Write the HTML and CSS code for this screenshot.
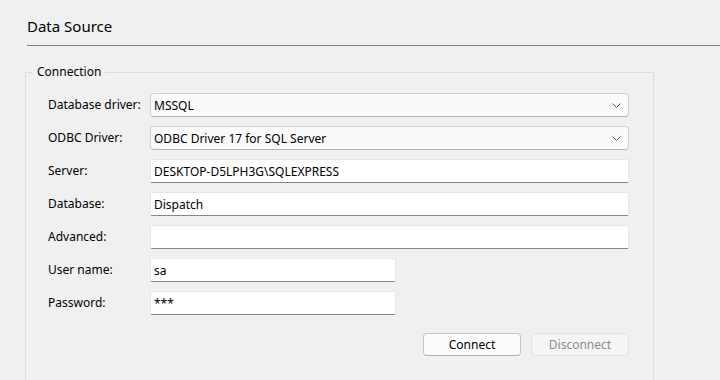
FILE: index.html
```html
<!DOCTYPE html>
<html lang="en">
<head>
  <meta charset="utf-8">
  <title>Data Source</title>
  <link rel="stylesheet" href="styles.css">
</head>
<body>
  <main class="page">
    <header class="page-head">
      <h1>Data Source</h1>
    </header>
    <fieldset class="group">
      <legend>Connection</legend>
      <div class="form">
        <label>Database driver:</label>
        <div class="combo"><span>MSSQL</span>
          <svg width="9" height="5" viewBox="0 0 9 5"><path d="M0.5 0.5 L4.5 4.5 L8.5 0.5" fill="none" stroke="#555" stroke-width="1"/></svg>
        </div>
        <label>ODBC Driver:</label>
        <div class="combo"><span>ODBC Driver 17 for SQL Server</span>
          <svg width="9" height="5" viewBox="0 0 9 5"><path d="M0.5 0.5 L4.5 4.5 L8.5 0.5" fill="none" stroke="#555" stroke-width="1"/></svg>
        </div>
        <label>Server:</label>
        <input class="field" type="text" value="DESKTOP-D5LPH3G\SQLEXPRESS">
        <label>Database:</label>
        <input class="field" type="text" value="Dispatch">
        <label>Advanced:</label>
        <input class="field" type="text" value="">
        <label>User name:</label>
        <input class="field short" type="text" value="sa">
        <label>Password:</label>
        <input class="field short" type="text" value="***">
      </div>
      <div class="actions">
        <button class="btn">Connect</button>
        <button class="btn" disabled>Disconnect</button>
      </div>
    </fieldset>
  </main>
</body>
</html>
```

FILE: styles.css
```css
html,body {
  margin: 0;
  padding: 0;
  background: #f0f0f0;
  font-family: "Noto Sans", "Open Sans", sans-serif;
  font-size: 12px;
  color: #000;
}
.page{
  height: 380px;
  padding-left: 27px;
  overflow: hidden;
}
.page-head{
  height: 45px;
  border-bottom: 1px solid #808080;
}
.page-head h1{
  margin: 0;
  padding-top: 16px;
  font-size: 15px;
  font-weight: normal;
  line-height: 20px;
}
.group{
  width: 583px;
  height: 400px;
  margin: 18px 0 0 -2px;
  padding: 13px 22px 0 22px;
  border: 1px solid #dcdcdc;
  box-sizing: content-box;
}
.group legend{
  margin-left: -16px;
  padding: 0 4px 0 5px;
  line-height: 16px;
}
.form{
  display: grid;
  grid-template-columns: 102px 479px;
  row-gap: 9px;
  align-items: center;
}
.form label{
  line-height: 24px;
}
.combo,
.field{
  box-sizing: border-box;
  height: 24px;
  margin: 0;
  font-family: inherit;
  font-size: 12px;
}
.combo{
  display: flex;
  align-items: center;
  justify-content: space-between;
  padding: 0 7px 0 3px;
  background: #fafafa;
  border: 1px solid #d0d0d0;
  border-bottom-color: #b4b4b4;
  border-radius: 4px;
}
.combo svg{
  margin-top: 1px;
}
.field{
  width: 479px;
  padding: 0 3px;
  background: #fff;
  border: 1px solid #e6e6e6;
  border-bottom-color: #868686;
  border-radius: 2px;
  color: #000;
  outline: none;
}
.field.short{
  width: 246px;
}
.actions{
  display: flex;
  justify-content: flex-end;
  gap: 10px;
  width: 581px;
  margin-top: 18px;
}
.btn{
  box-sizing: border-box;
  width: 98px;
  height: 23px;
  padding: 0;
  font-family: inherit;
  font-size: 12px;
  color: #000;
  background: #fbfbfb;
  border: 1px solid #c4c4c4;
  border-bottom-color: #b0b0b0;
  border-radius: 4px;
}
.btn:disabled{
  color: #8c8c8c;
  background: #f5f5f5;
  border-color: #e2e2e2;
}
```
